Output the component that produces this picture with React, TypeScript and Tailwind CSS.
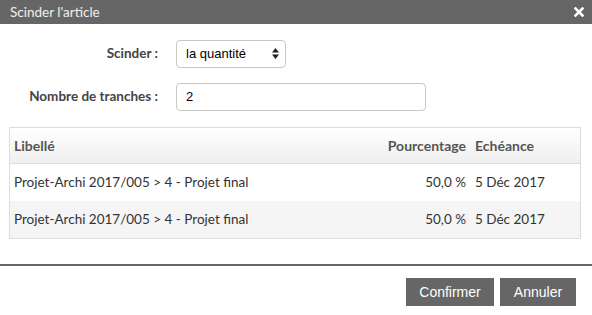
const rows = [
  { label: "Projet-Archi 2017/005 > 4 - Projet final", pct: "50,0 %", date: "5 Déc 2017" },
  { label: "Projet-Archi 2017/005 > 4 - Projet final", pct: "50,0 %", date: "5 Déc 2017" },
];

export default function App() {
  return (
    <div className="w-[592px] h-[315px] bg-white font-['Lato',sans-serif] text-[13.5px] text-[#333] flex flex-col">
      <div className="h-[24px] bg-[#666] flex items-center justify-between pl-[10px] pr-[8px] text-white/90">
        <span className="text-[13.5px]">Scinder l'article</span>
        <svg width="10" height="10" viewBox="0 0 10 10" className="text-white">
          <path d="M1.5 1.5 L8.5 8.5 M8.5 1.5 L1.5 8.5" stroke="currentColor" strokeWidth="2.6" strokeLinecap="square" />
        </svg>
      </div>

      <div className="flex flex-col">
        <div className="flex items-center mt-[16px] h-[27px]">
          <label className="w-[159px] text-right pr-[1px] font-bold text-[#444]">Scinder :</label>
          <div className="ml-[17px] w-[110px] h-[28px] border border-[#c8c8c8] rounded-[4px] flex items-center justify-between pl-[9px] pr-[6px] font-['Liberation_Sans',sans-serif] text-[13px] text-black">
            <span>la quantité</span>
            <svg width="7" height="11" viewBox="0 0 7 11">
              <path d="M3.5 0 L7 4.5 L0 4.5 Z M3.5 11 L7 6.5 L0 6.5 Z" fill="#222" />
            </svg>
          </div>
        </div>
        <div className="flex items-center mt-[16px] h-[27px]">
          <label className="w-[159px] text-right pr-[1px] font-bold text-[#444]">Nombre de tranches :</label>
          <div className="ml-[17px] w-[250px] h-[28px] border border-[#c8c8c8] rounded-[4px] flex items-center pl-[9px] font-['Liberation_Sans',sans-serif] text-[13px] text-black">
            2
          </div>
        </div>
      </div>

      <div className="mx-[9px] mt-[17px] w-[572px] border border-[#ddd]">
        <div className="h-[36px] flex items-center font-bold text-[14px] text-[#555] bg-gradient-to-b from-white to-[#efefef] border-b border-[#ddd]">
          <div className="flex-1 pl-[4px]">Libellé</div>
          <div className="w-[90px] text-right">Pourcentage</div>
          <div className="w-[114px] pl-[9px]">Echéance</div>
        </div>
        {rows.map((r, i) => (
          <div
            key={i}
            className={`h-[37px] flex items-center text-[#333] ${i % 2 === 1 ? "bg-[#f5f5f5]" : "bg-white"}`}
          >
            <div className="flex-1 pl-[4px]">{r.label}</div>
            <div className="w-[90px] text-right">{r.pct}</div>
            <div className="w-[114px] pl-[9px]">{r.date}</div>
          </div>
        ))}
      </div>

      <div className="mt-[25px] h-[2px] bg-[#666]" />

      <div className="flex justify-end gap-[6px] pr-[16px] mt-[12px] font-['Liberation_Sans',sans-serif] text-[14px] text-white">
        <button className="w-[88px] h-[28px] bg-[#666]">Confirmer</button>
        <button className="w-[76px] h-[28px] bg-[#666]">Annuler</button>
      </div>
    </div>
  );
}
